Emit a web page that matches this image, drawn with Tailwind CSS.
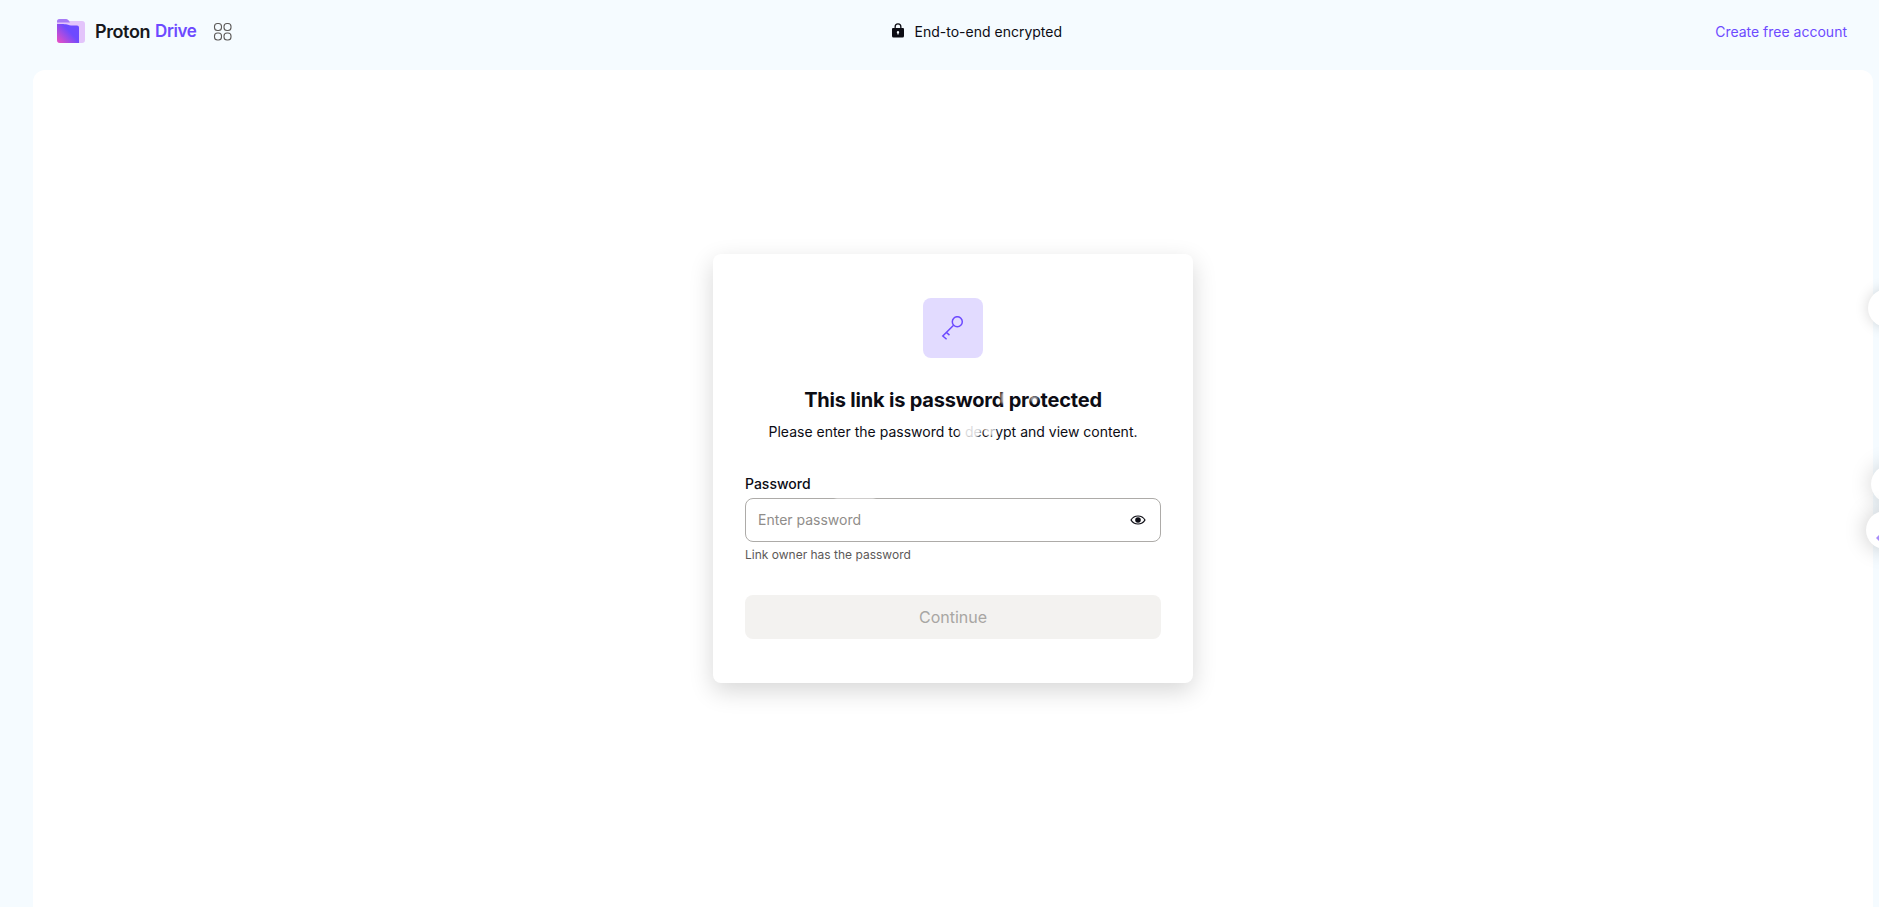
<!doctype html>
<html lang="en">
<head>
<meta charset="utf-8">
<title>Proton Drive</title>
<script src="https://cdn.jsdelivr.net/npm/@tailwindcss/browser@4"></script>
</head>
<body class="m-0 overflow-hidden">
<div class="relative flex h-[907px] w-[1879px] flex-col overflow-hidden bg-[#f5fbff] font-['Inter',sans-serif] text-[#0c0c14]">
  <header class="flex h-[70px] shrink-0 items-center justify-between pb-[7px] pl-[57px] pr-[32px]">
    <div class="flex items-center">
      <svg width="28" height="24" viewBox="0 0 28 24" class="mb-[1px]">
        <defs>
          <linearGradient id="f" x1="0" y1="1" x2="1" y2="0.2"><stop offset="0" stop-color="#f04fc0"/><stop offset="0.65" stop-color="#6d4aff"/></linearGradient>
        </defs>
        <path d="M0 3a3 3 0 0 1 3-3h6c1.500 0 2.200 1 3 2h13a3 3 0 0 1 3 3v16a3 3 0 0 1-3 3H3a3 3 0 0 1-3-3z" fill="#e3c4fb"/>
        <path d="M0 5c4 0 9 0 11 .7 1 .4 2 .8 3 .8h6a2 2 0 0 1 2 2V24H3a3 3 0 0 1-3-3z" fill="url(#f)"/>
        <path d="M0 2.500A2.500 2.500 0 0 1 2.500 0H9c1.500 0 2.200 1 3 2l1 1.500H0z" fill="#a77bf6"/>
      </svg>
      <span class="ml-[10px] text-[18px] leading-none font-semibold tracking-[-0.4px] text-[#17181c]">Proton</span>
      <span class="ml-[5px] text-[17px] leading-none font-semibold tracking-[-0.4px] text-[#6d4aff]">Drive</span>
      <svg width="20" height="20" viewBox="0 0 20 20" fill="none" stroke="#5c5958" stroke-width="1.100" class="ml-[17px]">
        <rect x="1.500" y="1.500" width="7" height="7" rx="3"/>
        <rect x="11" y="1.500" width="7" height="7" rx="3"/>
        <rect x="1.500" y="11" width="7" height="7" rx="3"/>
        <rect x="11" y="11" width="7" height="7" rx="3"/>
      </svg>
    </div>
    <div class="ml-[4px] flex items-center gap-[10px] text-sm">
      <svg width="14" height="15" viewBox="0 0 14 15" class="mb-[3px]" fill="#0c0c14">
        <path fill-rule="evenodd" d="M3.500 5V3.700a3.500 3.500 0 0 1 7 0V5H12a1 1 0 0 1 1 1v7a1.500 1.500 0 0 1-1.500 1.500h-9A1.500 1.500 0 0 1 1 13V6a1 1 0 0 1 1-1zm1.300 0h4.400V3.700a2.200 2.200 0 0 0-4.400 0zM7 8a1.300 1.300 0 0 0-.6 2.400v1h1.200v-1A1.300 1.300 0 0 0 7 8z"/>
      </svg>
      <span>End-to-end encrypted</span>
    </div>
    <div class="text-right text-sm text-[#6d4aff]">Create free account</div>
  </header>

  <main class="ml-[33px] mr-[6px] flex flex-1 items-center justify-center rounded-t-[12px] bg-white pb-[41px]">
    <section class="flex w-[480px] flex-col items-center rounded-[8px] bg-white px-8 pt-[44px] pb-[44px] shadow-[0_8px_24px_rgba(0,0,0,0.16)]">
      <div class="flex h-[60px] w-[60px] items-center justify-center rounded-[8px] bg-[#e2dbff]">
        <svg width="24" height="24" viewBox="0 0 24 24" fill="none" stroke="#6d4aff" stroke-width="1.500">
          <circle cx="16.300" cy="5.700" r="5"/>
          <path d="M12.600 9.300 1.800 20l3.800 3.200M5.400 16.400l3.100 2.700"/>
        </svg>
      </div>
      <h1 class="mt-[30px] text-[20px] leading-[24px] font-bold tracking-[-0.2px]">This link is password protected</h1>
      <p class="mt-[10px] text-sm leading-[20px]">Please enter the password to decrypt and view content.</p>
      <label class="mt-[32px] block w-full text-sm leading-[20px] font-medium">Password</label>
      <div class="mt-[4px] flex h-[44px] w-full items-center justify-between rounded-[8px] border border-[#adaba8] bg-white pl-[12px] pr-[14px]">
        <span class="text-sm text-[#8f8d8a]">Enter password</span>
        <svg width="16" height="16" viewBox="0 0 16 16" fill="none" stroke="#0c0c14" stroke-width="1.200">
          <path d="M1 8c1.500-2.500 4-4 7-4s5.500 1.500 7 4c-1.500 2.500-4 4-7 4s-5.500-1.500-7-4z"/>
          <circle cx="8" cy="8" r="2.800" fill="#0c0c14" stroke="none"/>
        </svg>
      </div>
      <p class="mt-[5px] w-full text-xs leading-[16px] text-[#5c5958]">Link owner has the password</p>
      <button class="mt-[32px] h-[44px] w-full rounded-[8px] bg-[#f3f2f0] text-base text-[#a8a6a3]">Continue</button>
    </section>
  </main>

  <div class="absolute left-[1868px] top-[289px] h-[38px] w-[38px] rounded-full bg-white shadow-[0_0_14px_rgba(0,0,0,0.16)]"></div>
  <div class="absolute left-[1871px] top-[465px] h-[38px] w-[38px] rounded-full bg-white shadow-[0_0_22px_rgba(0,0,0,0.18)]"></div>
  <div class="absolute left-[1866px] top-[511px] h-[38px] w-[38px] rounded-full bg-white shadow-[0_0_22px_rgba(0,0,0,0.22)]"></div>
  <div class="absolute left-[1876px] top-[533px] h-0 w-0 border-y-[5px] border-r-[5px] border-y-transparent border-r-[#a78bfa]"></div>

  <div class="absolute left-[959px] top-[424px] h-[14px] w-[22px] rounded-full bg-white/85 blur-[1px]"></div>
  <div class="absolute left-[984px] top-[426px] h-[10px] w-[12px] rounded-full bg-white/75 blur-[1px]"></div>
  <div class="absolute left-[1001px] top-[392px] h-[12px] w-[6px] rounded-full bg-white/70 blur-[1px]"></div>
  <div class="absolute left-[1030px] top-[396px] h-[6px] w-[8px] rounded-full bg-white/60 blur-[1px]"></div>
  <div class="absolute left-[835px] top-[496px] h-[3px] w-[40px] rounded-full bg-white/60 blur-[1px]"></div>
</div>
</body>
</html>
